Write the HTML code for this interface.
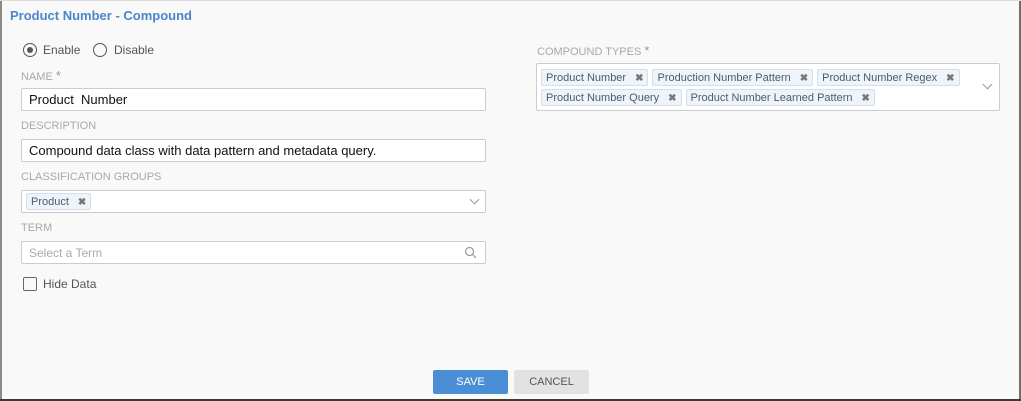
<!DOCTYPE html>
<html><head><style>
*{box-sizing:border-box;margin:0;padding:0}
body{width:1021px;height:401px;background:#f9f9f9;font-family:"Liberation Sans",sans-serif;position:relative;overflow:hidden;color:#555}
.a{position:absolute}
.title{left:10px;top:8px;font-size:13px;font-weight:bold;color:#4a86c8}
.lbl{font-size:11px;color:#a8a8a8;left:21px}
.lbl b{font-weight:normal;color:#999;font-size:13px}
.inp{left:21px;width:465px;height:23px;background:#fff;border:1px solid #ccc;border-radius:2px;font-size:13px;color:#111;padding:3px 7px}
.tag{display:inline-block;background:#eef4fa;border:1px solid #d3dfec;border-radius:2px;font-size:11px;color:#4a5a70;padding:1px 4px;height:17px;line-height:14px;margin-right:4px}
.tag i{font-style:normal;color:#777;margin-left:9px;font-size:10px;font-weight:bold}
.chev{position:absolute;width:7px;height:7px;border-right:1px solid #999;border-bottom:1px solid #999;transform:rotate(45deg)}
</style></head><body>
<div class="a" style="left:0;top:0;width:2px;height:401px;background:#8a8a8a"></div>
<div class="a" style="left:1019px;top:0;width:2px;height:401px;background:#6f6f6f"></div>
<div class="a" style="left:0;top:0;width:1021px;height:1px;background:#ddd"></div>
<div class="a" style="left:0;top:399px;width:1021px;height:2px;background:#3a3f30"></div>
<div class="a title">Product Number - Compound</div>

<div class="a" style="left:23px;top:43px;width:14px;height:14px;border:1px solid #555;border-radius:50%"><div style="margin:3px;width:6px;height:6px;border-radius:50%;background:#555"></div></div>
<div class="a" style="left:43px;top:43px;font-size:12px;color:#555">Enable</div>
<div class="a" style="left:93px;top:43px;width:14px;height:14px;border:1px solid #555;border-radius:50%"></div>
<div class="a" style="left:114px;top:43px;font-size:12px;color:#555">Disable</div>

<div class="a lbl" style="top:68px">NAME <b>*</b></div>
<div class="a inp" style="top:88px">Product&nbsp; Number</div>
<div class="a lbl" style="top:120px">DESCRIPTION</div>
<div class="a inp" style="top:139px">Compound data class with data pattern and metadata query.</div>
<div class="a lbl" style="top:171px">CLASSIFICATION GROUPS</div>
<div class="a inp" style="top:190px;padding:2px 4px"><span class="tag">Product<i>✖</i></span><div class="chev" style="left:449px;top:5px"></div></div>
<div class="a lbl" style="top:222px">TERM</div>
<div class="a inp" style="top:241px;color:#aaa;font-size:12px;padding-top:4px">Select a Term
<svg class="a" style="left:442px;top:4px" width="13" height="13" viewBox="0 0 13 13"><circle cx="5.5" cy="5.5" r="4" fill="none" stroke="#999" stroke-width="1.2"/><path d="M8.5 8.5L12 12" stroke="#999" stroke-width="1.2"/></svg></div>
<div class="a" style="left:23px;top:277px;width:14px;height:14px;border:1px solid #666;border-radius:2px"></div>
<div class="a" style="left:43px;top:277px;font-size:12px;color:#555">Hide Data</div>

<div class="a lbl" style="left:537px;top:43px">COMPOUND TYPES <b>*</b></div>
<div class="a" style="left:536px;top:63px;width:464px;height:48px;background:#fff;border:1px solid #ccc;border-radius:2px;padding:3px 4px;line-height:20px">
<span class="tag">Product Number<i>✖</i></span><span class="tag">Production Number Pattern<i>✖</i></span><span class="tag">Product Number Regex<i>✖</i></span><br><span class="tag">Product Number Query<i>✖</i></span><span class="tag">Product Number Learned Pattern<i>✖</i></span>
<div class="chev" style="left:447px;top:17px"></div></div>

<div class="a" style="left:433px;top:370px;width:75px;height:24px;background:#4a8fd6;border-radius:2px;color:#fff;font-size:11px;text-align:center;line-height:24px">SAVE</div>
<div class="a" style="left:514px;top:370px;width:75px;height:24px;background:#e2e2e2;border-radius:2px;color:#555;font-size:11px;text-align:center;line-height:24px">CANCEL</div>
</body></html>
